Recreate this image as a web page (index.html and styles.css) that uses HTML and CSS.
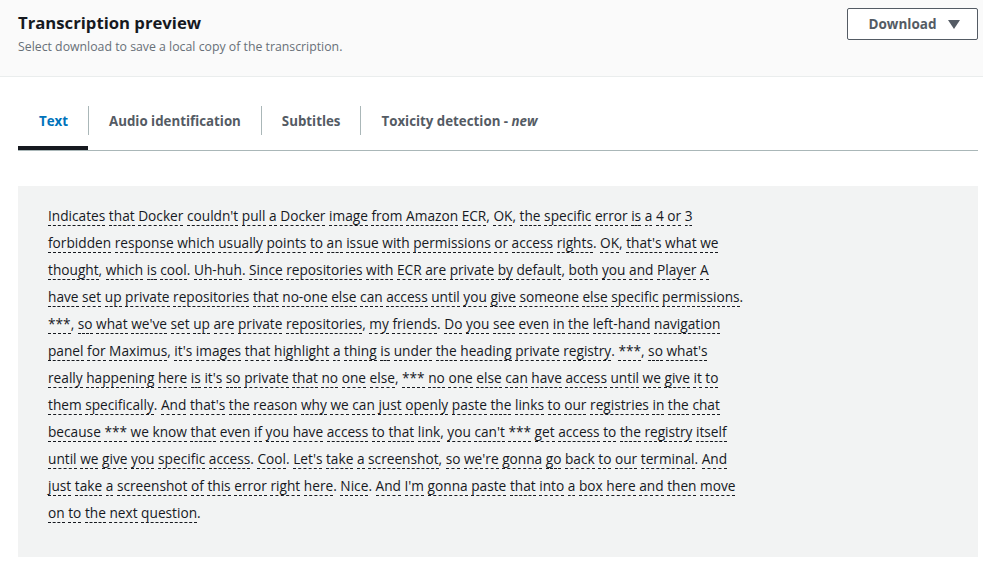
FILE: index.html
```html
<!DOCTYPE html>
<html>
<head>
    <meta charset="UTF-8">
    <title>Transcription preview</title>
    <link rel="stylesheet" href="styles.css">
</head>
<body>
    <div class="header">
        <div class="title-container">
            <div class="title">Transcription preview</div>
            <div class="subtitle">Select download to save a local copy of the transcription.</div>
        </div>
        <button class="download-button">Download
            <svg class="caret" width="12" height="9" viewBox="0 0 12 9"><polygon points="0,0 12,0 6,9" fill="#545b64"/></svg>
        </button>
    </div>

    <div class="tabs">
        <div class="tab active">Text</div>
        <div class="tab">Audio identification</div>
        <div class="tab">Subtitles</div>
        <div class="tab">Toxicity detection - <em>new</em></div>
    </div>

    <div class="transcript" id="transcript"></div>

    <script>
        // one entry per line of the transcript as it is shown
        var lines = [
            "Indicates that Docker couldn't pull a Docker image from Amazon ECR, OK, the specific error is a 4 or 3",
            "forbidden response which usually points to an issue with permissions or access rights. OK, that's what we",
            "thought, which is cool. Uh-huh. Since repositories with ECR are private by default, both you and Player A",
            "have set up private repositories that no-one else can access until you give someone else specific permissions.",
            "***, so what we've set up are private repositories, my friends. Do you see even in the left-hand navigation",
            "panel for Maximus, it's images that highlight a thing is under the heading private registry. ***, so what's",
            "really happening here is it's so private that no one else, *** no one else can have access until we give it to",
            "them specifically. And that's the reason why we can just openly paste the links to our registries in the chat",
            "because *** we know that even if you have access to that link, you can't *** get access to the registry itself",
            "until we give you specific access. Cool. Let's take a screenshot, so we're gonna go back to our terminal. And",
            "just take a screenshot of this error right here. Nice. And I'm gonna paste that into a box here and then move",
            "on to the next question."
        ];

        var box = document.getElementById('transcript');
        lines.forEach(function(line) {
            var row = document.createElement('div');
            row.className = 'line';
            line.split(' ').forEach(function(token, i) {
                // keep trailing punctuation outside the underlined word
                var m = token.match(/^(.*?)([.,]?)$/);
                if (i > 0) row.appendChild(document.createTextNode(' '));
                var word = document.createElement('span');
                word.className = 'word';
                word.textContent = m[1];
                row.appendChild(word);
                if (m[2]) row.appendChild(document.createTextNode(m[2]));
            });
            box.appendChild(row);
        });
    </script>
</body>
</html>
```

FILE: styles.css
```css
body {
    margin: 0;
    background-color: #ffffff;
    font-family: "Open Sans", "Liberation Sans", sans-serif;
    color: #16191f;
}
.header {
    display: flex;
    justify-content: space-between;
    align-items: flex-start;
    background-color: #fafafa;
    border-bottom: 1px solid #eaeded;
    padding: 8px 5px 0 18px;
    height: 68px;
}
.title {
    font-size: 16.7px;
    font-weight: bold;
    line-height: 22px;
    margin-top: 4px;
}
.subtitle {
    font-size: 12.3px;
    color: #687078;
    line-height: 16px;
    margin-top: 5px;
}
.download-button {
    display: flex;
    align-items: center;
    justify-content: center;
    background-color: #ffffff;
    border: 1px solid #545b64;
    border-radius: 2px;
    color: #545b64;
    font-family: inherit;
    font-size: 13.5px;
    font-weight: bold;
    width: 131px;
    height: 32px;
    padding: 0 0 0 4px;
}
.caret {
    margin-left: 12px;
}
.tabs {
    display: flex;
    margin: 29px 5px 0 18px;
    border-bottom: 1px solid #aab7b8;
}
.tab {
    position: relative;
    padding: 7px 20px 21px 20px;
    font-size: 13.3px;
    font-weight: bold;
    color: #545b64;
    line-height: 16px;
}
.tab + .tab::before {
    content: "";
    position: absolute;
    left: 0;
    top: 0;
    bottom: 15px;
    border-left: 1px solid #aab7b8;
}
.tab + .tab {
    padding-left: 21px;
}
.tab.active {
    color: #0073bb;
    box-shadow: inset 0 -4px 0 #16191f;
    padding-left: 21px;
}
.tab em {
    font-style: italic;
}
.transcript {
    margin: 35px 5px 16px 18px;
    background-color: #f2f3f3;
    padding: 16px 30px 28px 30px;
    height: 327px;
    font-size: 13.7px;
    line-height: 27px;
}
.line {
    white-space: nowrap;
}
.word {
    border-bottom: 1px dashed #16191f;
}
```
